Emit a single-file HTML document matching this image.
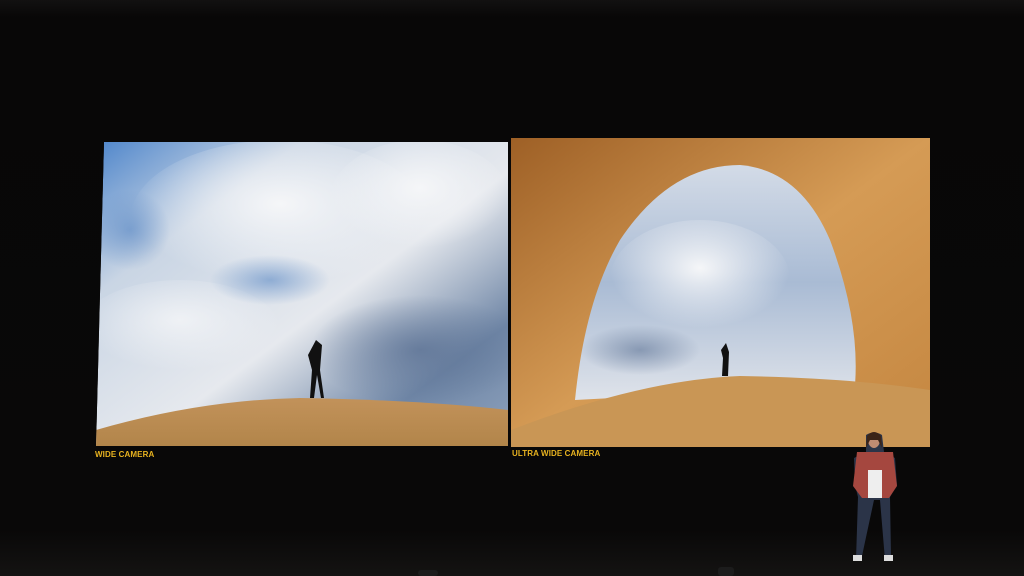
<!DOCTYPE html>
<html><head><style>
html,body{margin:0;padding:0;width:1024px;height:576px;overflow:hidden;background:#070606;}
.lbl{position:absolute;font-family:"Liberation Sans",sans-serif;font-weight:bold;font-size:8px;color:#e8b320;letter-spacing:0.1px;}
</style></head><body>
<svg width="1024" height="576" style="position:absolute;left:0;top:0">
<defs>
<linearGradient id="bg" x1="0" y1="0" x2="0" y2="1"><stop offset="0" stop-color="#121111"/><stop offset="0.03" stop-color="#080707"/><stop offset="0.92" stop-color="#090808"/><stop offset="1" stop-color="#141312"/></linearGradient>
<linearGradient id="sky1" x1="0" y1="0" x2="1" y2="1"><stop offset="0" stop-color="#4f86cb"/><stop offset="0.25" stop-color="#c9d5e4"/><stop offset="0.55" stop-color="#e6e9ee"/><stop offset="0.8" stop-color="#6f86a6"/><stop offset="1" stop-color="#8ea2bd"/></linearGradient>
<linearGradient id="sand" x1="0" y1="0" x2="0" y2="1"><stop offset="0" stop-color="#c2925a"/><stop offset="1" stop-color="#b2854a"/></linearGradient>
<linearGradient id="rock" x1="0" y1="0" x2="1" y2="1"><stop offset="0" stop-color="#9e6026"/><stop offset="0.5" stop-color="#d59b55"/><stop offset="1" stop-color="#c48640"/></linearGradient>
<linearGradient id="sky2" x1="0" y1="0" x2="0" y2="1"><stop offset="0" stop-color="#d3dbe7"/><stop offset="0.5" stop-color="#a9bbd4"/><stop offset="1" stop-color="#dfe3ea"/></linearGradient>
<radialGradient id="cl" cx="0.5" cy="0.4" r="0.5"><stop offset="0" stop-color="#f5f6f8"/><stop offset="1" stop-color="#f5f6f8" stop-opacity="0"/></radialGradient>
<radialGradient id="bl" cx="0.5" cy="0.5" r="0.5"><stop offset="0" stop-color="#5a88c4"/><stop offset="1" stop-color="#5a88c4" stop-opacity="0"/></radialGradient>
<radialGradient id="gr" cx="0.5" cy="0.5" r="0.5"><stop offset="0" stop-color="#5d7395"/><stop offset="1" stop-color="#5d7395" stop-opacity="0"/></radialGradient>
<clipPath id="c1"><polygon points="104,142 508,142 508,446 96,446"/></clipPath>
<clipPath id="c2"><rect x="511" y="138" width="419" height="309"/></clipPath>
</defs>
<rect width="1024" height="576" fill="url(#bg)"/>
<g clip-path="url(#c1)">
<polygon points="104,142 508,142 508,446 96,446" fill="url(#sky1)"/>
<ellipse cx="280" cy="220" rx="150" ry="80" fill="url(#cl)"/>
<ellipse cx="180" cy="330" rx="100" ry="50" fill="url(#cl)" opacity="0.8"/>
<ellipse cx="420" cy="200" rx="90" ry="60" fill="url(#cl)"/>
<ellipse cx="270" cy="280" rx="60" ry="25" fill="url(#bl)" opacity="0.6"/>
<ellipse cx="130" cy="230" rx="40" ry="40" fill="url(#bl)" opacity="0.6"/>
<ellipse cx="420" cy="350" rx="110" ry="55" fill="url(#gr)" opacity="0.8"/>
<path d="M96,430 Q200,400 300,398 Q420,400 508,410 L508,446 L96,446Z" fill="url(#sand)"/>
<path d="M310,398 L312,370 L308,355 L316,340 L322,345 L320,370 L324,398 L321,398 L317,375 L314,398Z" fill="#111"/>
</g>
<g clip-path="url(#c2)">
<rect x="511" y="138" width="419" height="309" fill="url(#rock)"/>
<path d="M575,400 Q585,300 620,240 Q670,165 740,165 Q800,170 830,240 Q860,320 855,385 Z" fill="url(#sky2)"/>
<ellipse cx="700" cy="280" rx="90" ry="60" fill="url(#cl)"/>
<ellipse cx="640" cy="350" rx="60" ry="25" fill="url(#gr)" opacity="0.6"/>
<path d="M511,430 Q640,380 740,376 Q850,378 930,390 L930,447 L511,447Z" fill="#c99655"/>
<path d="M722,376 L723,358 L721,350 L726,343 L729,352 L728,376Z" fill="#111"/>
</g>
<path d="M866,435 Q874,430 882,435 L884,452 L895,458 L897,485 L890,497 L891,556 L885,560 L880,500 L874,500 L862,556 L856,560 L858,497 L855,485 L854,458 L866,452Z" fill="#2b3448"/>
<path d="M857,452 L893,452 L897,486 L889,498 L862,498 L853,486Z" fill="#a5473f"/>
<rect x="868" y="470" width="14" height="28" fill="#eee"/>
<ellipse cx="874" cy="440" rx="6" ry="8" fill="#c08c72"/>
<path d="M867,436 Q874,428 881,436 L882,448 L878,440 L870,440 L866,448Z" fill="#3a2418"/>
<rect x="853" y="555" width="9" height="6" fill="#ddd"/><rect x="884" y="555" width="9" height="6" fill="#ddd"/>
<rect x="418" y="570" width="20" height="6" rx="3" fill="#1c1c1c"/>
<rect x="718" y="567" width="16" height="9" rx="3" fill="#1c1c1c"/>
</svg>
<div class="lbl" style="left:95px;top:450px">WIDE CAMERA</div>
<div class="lbl" style="left:512px;top:449px">ULTRA WIDE CAMERA</div>
</body></html>
